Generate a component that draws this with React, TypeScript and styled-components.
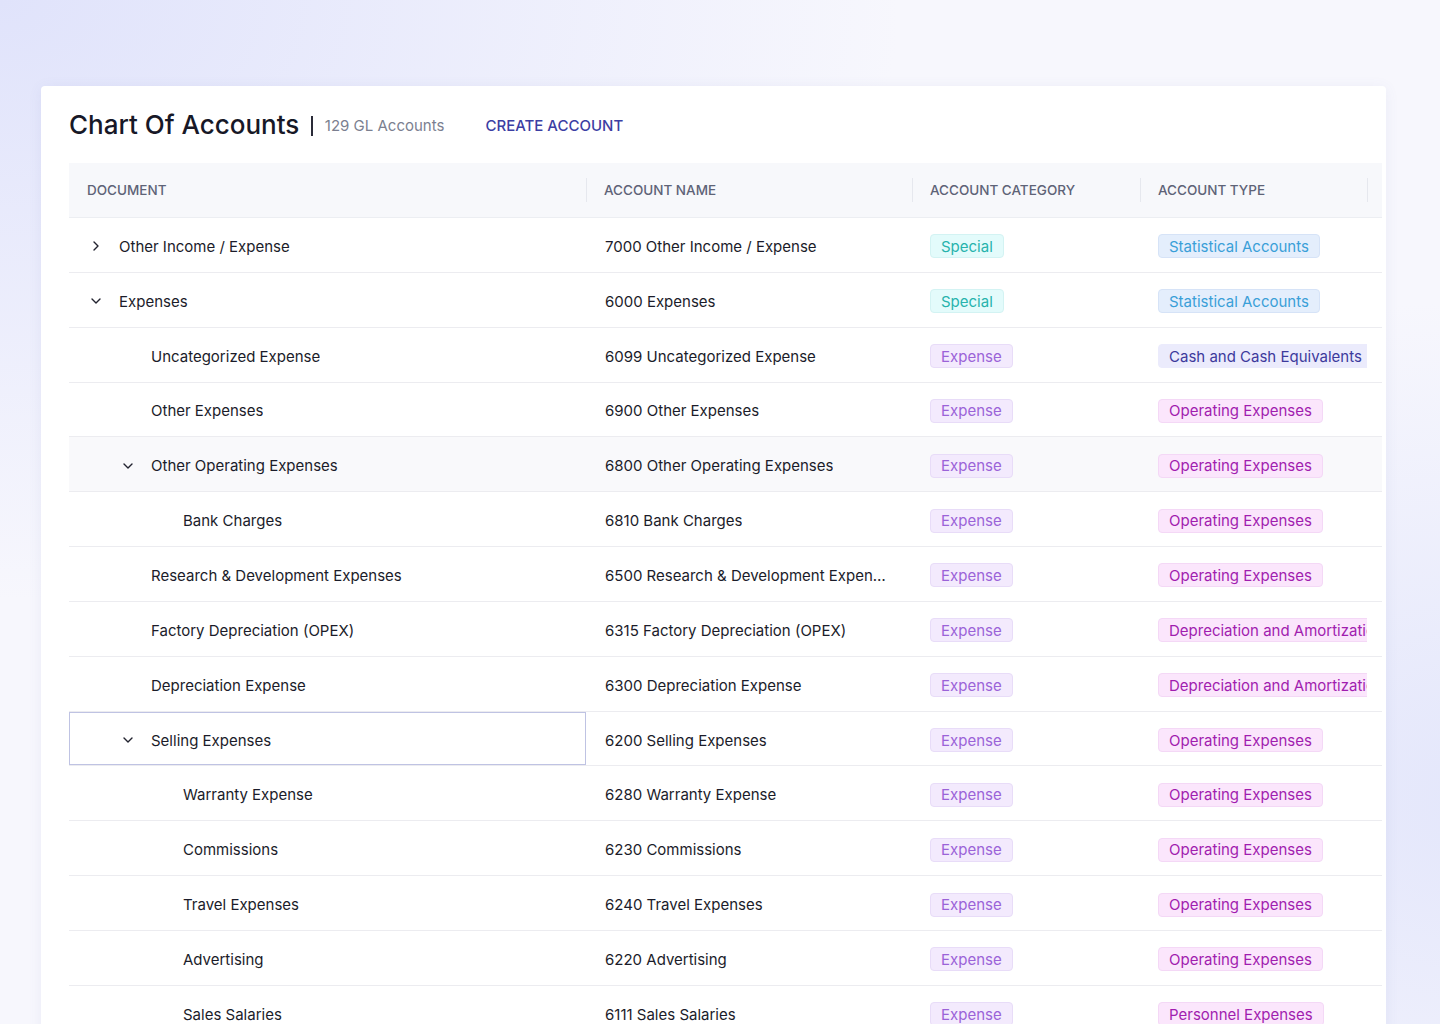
import styled, { createGlobalStyle } from 'styled-components';
import { ChevronDown, ChevronRight } from 'lucide-react';

type Tone = 'special' | 'statistical' | 'expense' | 'cash' | 'operating';

interface Row {
    level: number;
    chevron?: 'right' | 'down';
    doc: string;
    name: string;
    category: { label: string; tone: Tone };
    type: { label: string; tone: Tone };
    hovered?: boolean;
    selected?: boolean;
}

const SPECIAL = { label: 'Special', tone: 'special' as Tone };
const EXPENSE = { label: 'Expense', tone: 'expense' as Tone };
const STAT = { label: 'Statistical Accounts', tone: 'statistical' as Tone };
const OPEX = { label: 'Operating Expenses', tone: 'operating' as Tone };
const DEPR = { label: 'Depreciation and Amortization', tone: 'operating' as Tone };

const rows: Row[] = [
    { level: 0, chevron: 'right', doc: 'Other Income / Expense', name: '7000 Other Income / Expense', category: SPECIAL, type: STAT },
    { level: 0, chevron: 'down', doc: 'Expenses', name: '6000 Expenses', category: SPECIAL, type: STAT },
    { level: 1, doc: 'Uncategorized Expense', name: '6099 Uncategorized Expense', category: EXPENSE, type: { label: 'Cash and Cash Equivalents', tone: 'cash' } },
    { level: 1, doc: 'Other Expenses', name: '6900 Other Expenses', category: EXPENSE, type: OPEX },
    { level: 1, chevron: 'down', doc: 'Other Operating Expenses', name: '6800 Other Operating Expenses', category: EXPENSE, type: OPEX, hovered: true },
    { level: 2, doc: 'Bank Charges', name: '6810 Bank Charges', category: EXPENSE, type: OPEX },
    { level: 1, doc: 'Research & Development Expenses', name: '6500 Research & Development Expenses', category: EXPENSE, type: OPEX },
    { level: 1, doc: 'Factory Depreciation (OPEX)', name: '6315 Factory Depreciation (OPEX)', category: EXPENSE, type: DEPR },
    { level: 1, doc: 'Depreciation Expense', name: '6300 Depreciation Expense', category: EXPENSE, type: DEPR },
    { level: 1, chevron: 'down', doc: 'Selling Expenses', name: '6200 Selling Expenses', category: EXPENSE, type: OPEX, selected: true },
    { level: 2, doc: 'Warranty Expense', name: '6280 Warranty Expense', category: EXPENSE, type: OPEX },
    { level: 2, doc: 'Commissions', name: '6230 Commissions', category: EXPENSE, type: OPEX },
    { level: 2, doc: 'Travel Expenses', name: '6240 Travel Expenses', category: EXPENSE, type: OPEX },
    { level: 2, doc: 'Advertising', name: '6220 Advertising', category: EXPENSE, type: OPEX },
    { level: 2, doc: 'Sales Salaries', name: '6111 Sales Salaries', category: EXPENSE, type: { label: 'Personnel Expenses', tone: 'operating' } },
];

const tones: Record<Tone, { bg: string; border: string; color: string }> = {
    special: { bg: '#e3fbfb', border: '#d3f3f3', color: '#27b3ad' },
    statistical: { bg: '#e4eefc', border: '#d6e3f7', color: '#3a9fd8' },
    expense: { bg: '#f3eafd', border: '#e8dcf8', color: '#9b63d8' },
    cash: { bg: '#ebebfc', border: '#ebebfc', color: '#3d3a9c' },
    operating: { bg: '#fbe6fc', border: '#f4d8f6', color: '#a11daf' },
};

export default function App() {
    return (
        <>
            <GlobalStyle />
            <Page>
                <Card>
                    <TitleBar>
                        <Title>Chart Of Accounts</Title>
                        <Divider />
                        <Count>129 GL Accounts</Count>
                        <CreateLink>CREATE ACCOUNT</CreateLink>
                    </TitleBar>
                    <Table>
                        <HeadRow>
                            <HeadCell>DOCUMENT</HeadCell>
                            <HeadCell>ACCOUNT NAME</HeadCell>
                            <HeadCell>ACCOUNT CATEGORY</HeadCell>
                            <HeadCell>ACCOUNT TYPE</HeadCell>
                            <HeadCell />
                        </HeadRow>
                        {rows.map((r) => (
                            <BodyRow key={r.name} $hovered={r.hovered}>
                                <DocCell $level={r.level} $selected={r.selected}>
                                    <Toggle>
                                        {r.chevron === 'right' && <ChevronRight size={16} strokeWidth={2.1} />}
                                        {r.chevron === 'down' && <ChevronDown size={16} strokeWidth={2.1} />}
                                    </Toggle>
                                    <CellText>{r.doc}</CellText>
                                </DocCell>
                                <NameCell>
                                    <CellText>{r.name}</CellText>
                                </NameCell>
                                <BadgeCell>
                                    <Badge $tone={r.category.tone}>{r.category.label}</Badge>
                                </BadgeCell>
                                <BadgeCell>
                                    <Badge $tone={r.type.tone}>{r.type.label}</Badge>
                                </BadgeCell>
                                <BadgeCell />
                            </BodyRow>
                        ))}
                    </Table>
                </Card>
            </Page>
        </>
    );
}

const GlobalStyle = createGlobalStyle`
    html, body {
        margin: 0;
        padding: 0;
        height: 1024px;
        overflow: hidden;
    }
    body {
        font-family: Inter, "Liberation Sans", sans-serif;
        color: #1b1c2a;
    }
    * { box-sizing: border-box; }
`;

const Page = styled.div`
    width: 1440px;
    height: 1024px;
    overflow: hidden;
    padding: 86px 54px 0 41px;
    background:
        radial-gradient(ellipse 700px 500px at 1500px 800px, #e3e6fb 0%, rgba(227, 230, 251, 0) 100%),
        radial-gradient(ellipse 900px 600px at 0px 0px, #e0e3fb 0%, rgba(224, 227, 251, 0) 100%),
        #f7f7fd;
`;

const Card = styled.section`
    width: 1345px;
    height: 1000px;
    background: #ffffff;
    border-radius: 4px;
    box-shadow: 0 2px 14px rgba(90, 100, 170, 0.08);
    padding: 0 4px 0 28px;
`;

const TitleBar = styled.div`
    height: 77px;
    display: flex;
    align-items: center;
    padding-bottom: 1px;
`;

const Title = styled.h1`
    margin: 0;
    font-size: 26px;
    font-weight: 500;
    letter-spacing: 0;
    color: #171827;
`;

const Divider = styled.span`
    width: 1.5px;
    height: 20px;
    background: #2a2b38;
    margin: 4px 12px 0 12px;
`;

const Count = styled.span`
    font-size: 15px;
    color: #7b7f90;
    margin-top: 2px;
`;

const CreateLink = styled.a`
    margin-left: 41px;
    margin-top: 2px;
    font-size: 15px;
    font-weight: 500;
    color: #3c3ea3;
    cursor: pointer;
`;

const Table = styled.div`
    width: 1313px;
    overflow: hidden;
`;

const columns = '517px 326px 228px 227px 1fr';

const HeadRow = styled.div`
    display: grid;
    grid-template-columns: ${columns};
    height: 55px;
    background: #f7f8fb;
    border-bottom: 1px solid #eceef2;
`;

const HeadCell = styled.div`
    display: flex;
    align-items: center;
    padding-left: 18px;
    font-size: 13.5px;
    font-weight: 500;
    color: #5e6377;
    position: relative;
    &:not(:first-child)::before {
        content: '';
        position: absolute;
        left: 0;
        top: 15px;
        bottom: 15px;
        width: 1px;
        background: #e6e8ee;
    }
`;

const BodyRow = styled.div<{ $hovered?: boolean }>`
    display: grid;
    grid-template-columns: ${columns};
    height: 54.85px;
    background: ${(p) => (p.$hovered ? '#f9f9fb' : '#ffffff')};
    border-bottom: 1px solid #ececf0;
`;

const DocCell = styled.div<{ $level: number; $selected?: boolean }>`
    display: flex;
    align-items: center;
    padding-top: 3px;
    padding-left: ${(p) => 19 + p.$level * 32}px;
    min-width: 0;
    box-shadow: ${(p) => (p.$selected ? 'inset 0 0 0 1px #bfc3e3' : 'none')};
`;

const Toggle = styled.span`
    width: 31px;
    flex: none;
    display: flex;
    align-items: center;
    color: #22232f;
    svg { margin-left: 0; }
`;

const CellText = styled.span`
    font-size: 15px;
    white-space: nowrap;
    overflow: hidden;
    text-overflow: ellipsis;
    color: #1b1c2a;
`;

const NameCell = styled.div`
    display: flex;
    align-items: center;
    padding: 3px 19px 0 19px;
    min-width: 0;
`;

const BadgeCell = styled.div`
    display: flex;
    align-items: center;
    padding: 3px 0 0 18px;
    min-width: 0;
    overflow: hidden;
`;

const Badge = styled.span<{ $tone: Tone }>`
    display: inline-flex;
    align-items: center;
    height: 24px;
    padding: 0 10px;
    border-radius: 4px;
    font-size: 15px;
    white-space: nowrap;
    flex: none;
    background: ${(p) => tones[p.$tone].bg};
    color: ${(p) => tones[p.$tone].color};
    border: 1px solid ${(p) => tones[p.$tone].border};
`;
